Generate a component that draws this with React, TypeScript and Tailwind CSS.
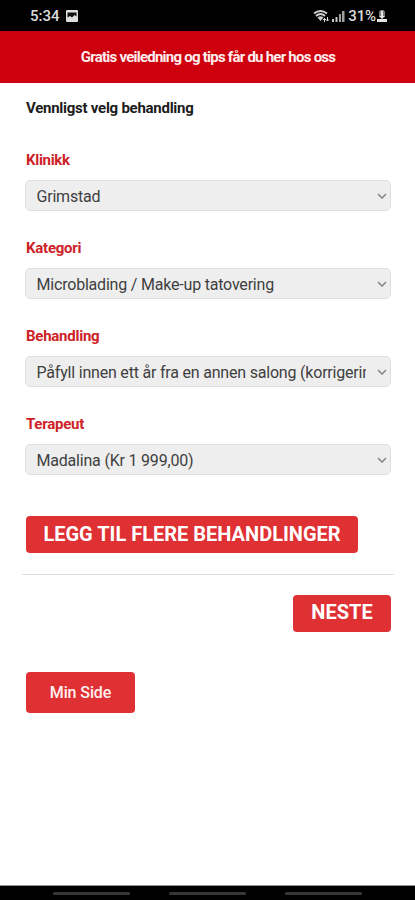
import React, { useState } from 'react';

interface SelectFieldProps {
  label: string;
  name: string;
  options: string[];
  labelClassName: string;
}

const SelectField: React.FC<SelectFieldProps> = ({ label, name, options, labelClassName }) => {
  const [value, setValue] = useState(options[0]);

  return (
    <div className="h-[88px]">
      <label htmlFor={name} className={`block h-[30px] w-fit pt-px text-[15px] leading-[18px] font-bold whitespace-nowrap text-[#cd2227] ${labelClassName}`}>
        {label}
      </label>
      <div className="grid items-center">
        <select
          id={name}
          name={name}
          value={value}
          onChange={e => setValue(e.target.value)}
          className="col-start-1 row-start-1 -ml-px h-[31px] w-[366px] appearance-none rounded-[5px] border border-[#e0e0e0] bg-[#eeeeee] pt-[2px] pr-[24px] pl-[10.5px] text-[16px] leading-[20px] tracking-[-0.2px] text-[#3f3f3f]"
        >
          {options.map(option => (
            <option key={option} value={option}>{option}</option>
          ))}
        </select>
        <svg className="pointer-events-none col-start-1 row-start-1 mr-[4px] h-[6px] w-[10px] justify-self-end" viewBox="0 0 10 6" fill="none">
          <path d="M1 1l4 4 4-4" stroke="#858585" strokeWidth="1.5" />
        </svg>
      </div>
    </div>
  );
};

const StatusBar = () => (
  <div className="flex h-[31px] items-center bg-black pr-[28px] pl-[30px] text-[#dcdcdc]">
    <span className="pt-px text-[15px] leading-none font-medium">5:34</span>
    <svg className="ml-[6px] h-[12px] w-[12px]" viewBox="0 0 12 12">
      <rect width="12" height="12" rx="1" fill="#dedede" />
      <path d="M1.5 2.5h9v4L8.5 5 6 7.5 4 6 1.500 7.500z" fill="#111" />
    </svg>
    <svg className="ml-auto h-[14px] w-[32px]" viewBox="0 0 32 14" fill="none">
      <path d="M1 4.500Q7.500-.5 14 4.500M3 7Q7.500 3 12 7" stroke="#d0d0d0" strokeWidth="2" />
      <path d="M4.500 8.500Q7.500 6 10.500 8.500L7.500 12z" fill="#c8c8c8" />
      <path d="M11.500 13V9.500M10 11l1.500-1.500L13 11M14.500 8v4M13 10.500l1.500 1.500 1.500-1.500" stroke="#e0e0e0" />
      <path d="M19 13v-3h2v3zM22.500 13V8h2v5z" fill="#c8c8c8" />
      <path d="M26 13V5h2v8zM29 13V2h2.500v11z" fill="#a0a0a0" />
    </svg>
    <span className="ml-[3px] pt-px text-[15px] leading-none font-medium tracking-[-0.1px]">31%</span>
    <svg className="ml-[1px] h-[13px] w-[10px]" viewBox="0 0 10 13">
      <path d="M3 1h4v1h1v6H2V2h1z" fill="#777" />
      <path d="M4 2h2v5h2L5 10 2 7h2zM0 10h10v3H0z" fill="#e4e4e4" />
    </svg>
  </div>
);

export default function App() {
  return (
    <div className="flex h-[900px] w-[415px] flex-col overflow-hidden bg-white font-[Roboto,'Liberation_Sans',sans-serif]">
      <StatusBar />

      <header className="flex h-[52px] items-center justify-center bg-[#cf000d]">
        <h1 className="pl-[1px] text-[15px] leading-[18px] font-bold tracking-[-0.76px] whitespace-nowrap text-[#ffeeee]">
          Gratis veiledning og tips får du her hos oss
        </h1>
      </header>

      <main className="flex flex-1 flex-col pr-[24px] pl-[26px]">
        <h2 className="mt-[16px] h-[51px] w-fit text-[15px] leading-[18px] font-bold tracking-[-0.26px] whitespace-nowrap text-[#1c1c1c]">
          Vennligst velg behandling
        </h2>

        <SelectField
          label="Klinikk"
          name="klinikk"
          options={['Grimstad']}
          labelClassName="tracking-[-0.3px]"
        />
        <SelectField
          label="Kategori"
          name="kategori"
          options={['Microblading / Make-up tatovering']}
          labelClassName="tracking-[-0.25px]"
        />
        <SelectField
          label="Behandling"
          name="behandling"
          options={['Påfyll innen ett år fra en annen salong (korrigering)']}
          labelClassName="tracking-[-0.25px]"
        />
        <SelectField
          label="Terapeut"
          name="terapeut"
          options={['Madalina (Kr 1 999,00)']}
          labelClassName="tracking-[-0.25px]"
        />

        <button type="button" className="mt-[14px] h-[37px] w-[332px] rounded-[4px] bg-[#df3034] pb-[2px] text-[20px] leading-[24px] font-bold whitespace-nowrap text-white">
          LEGG TIL FLERE BEHANDLINGER
        </button>

        <hr className="mt-[21px] -mr-[3px] -ml-[4px] border-t border-[#dddddd]" />

        <button type="button" className="mt-[20px] h-[37px] w-[98px] self-end rounded-[4px] bg-[#df3034] pb-[3px] text-[20px] leading-[24px] font-bold text-white">
          NESTE
        </button>

        <button type="button" className="mt-[40px] h-[41px] w-[109px] rounded-[4px] bg-[#df3034] text-[16px] leading-[20px] font-medium tracking-[-0.1px] text-[#fff0f0]">
          Min Side
        </button>
      </main>

      <nav className="flex h-[15px] items-center justify-center gap-[39px] border-t border-[#8d9492] bg-black">
        <span className="h-[3px] w-[77px] rounded-full bg-[#373737]" />
        <span className="h-[3px] w-[77px] rounded-full bg-[#373737]" />
        <span className="h-[3px] w-[77px] rounded-full bg-[#373737]" />
      </nav>
    </div>
  );
}
